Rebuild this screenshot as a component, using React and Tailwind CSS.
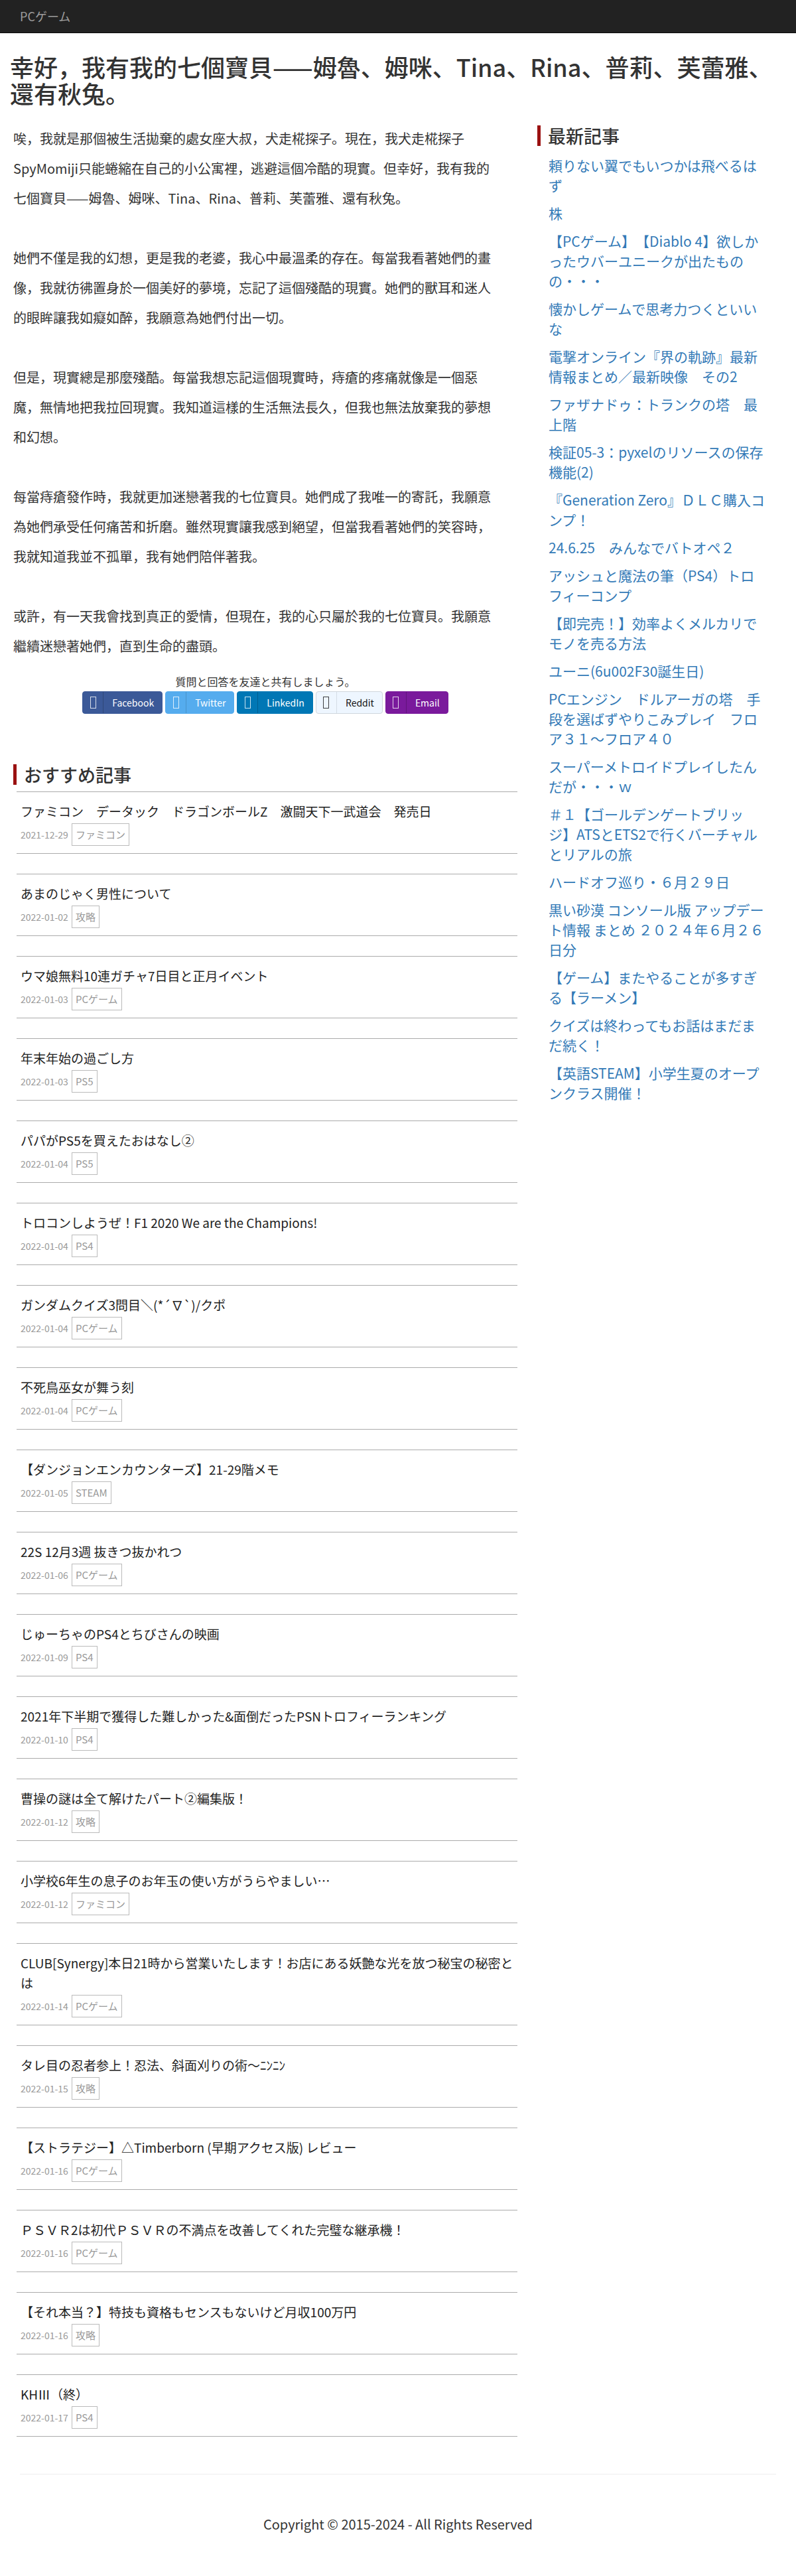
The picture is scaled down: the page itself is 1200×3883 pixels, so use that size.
const paragraphs = [
  '唉，我就是那個被生活拋棄的處女座大叔，犬走椛探子。現在，我犬走椛探子SpyMomiji只能蜷縮在自己的小公寓裡，逃避這個冷酷的現實。但幸好，我有我的七個寶貝——姆魯、姆咪、Tina、Rina、普莉、芙蕾雅、還有秋兔。',
  '她們不僅是我的幻想，更是我的老婆，我心中最溫柔的存在。每當我看著她們的畫像，我就彷彿置身於一個美好的夢境，忘記了這個殘酷的現實。她們的獸耳和迷人的眼眸讓我如癡如醉，我願意為她們付出一切。',
  '但是，現實總是那麼殘酷。每當我想忘記這個現實時，痔瘡的疼痛就像是一個惡魔，無情地把我拉回現實。我知道這樣的生活無法長久，但我也無法放棄我的夢想和幻想。',
  '每當痔瘡發作時，我就更加迷戀著我的七位寶貝。她們成了我唯一的寄託，我願意為她們承受任何痛苦和折磨。雖然現實讓我感到絕望，但當我看著她們的笑容時，我就知道我並不孤單，我有她們陪伴著我。',
  '或許，有一天我會找到真正的愛情，但現在，我的心只屬於我的七位寶貝。我願意繼續迷戀著她們，直到生命的盡頭。',
];

const shareButtons = [
  { label: 'Facebook', className: 'bg-[#3b5998] text-white border-[#3b5998]', divider: 'border-black/20' },
  { label: 'Twitter', className: 'bg-[#55acee] text-white border-[#55acee]', divider: 'border-black/15' },
  { label: 'LinkedIn', className: 'bg-[#0077b5] text-white border-[#0077b5]', divider: 'border-black/20' },
  { label: 'Reddit', className: 'bg-[#eef6ff] text-[#111] border-[#cfd6dd]', divider: 'border-black/10' },
  { label: 'Email', className: 'bg-[#7a1a9c] text-white border-[#7a1a9c]', divider: 'border-black/20' },
];

const recommended = [
  { title: 'ファミコン　データック　ドラゴンボールZ　激闘天下一武道会　発売日', date: '2021-12-29', tag: 'ファミコン' },
  { title: 'あまのじゃく男性について', date: '2022-01-02', tag: '攻略' },
  { title: 'ウマ娘無料10連ガチャ7日目と正月イベント', date: '2022-01-03', tag: 'PCゲーム' },
  { title: '年末年始の過ごし方', date: '2022-01-03', tag: 'PS5' },
  { title: 'パパがPS5を買えたおはなし②', date: '2022-01-04', tag: 'PS5' },
  { title: 'トロコンしようぜ！F1 2020 We are the Champions!', date: '2022-01-04', tag: 'PS4' },
  { title: 'ガンダムクイズ3問目＼(*´∇`)/クポ', date: '2022-01-04', tag: 'PCゲーム' },
  { title: '不死鳥巫女が舞う刻', date: '2022-01-04', tag: 'PCゲーム' },
  { title: '【ダンジョンエンカウンターズ】21-29階メモ', date: '2022-01-05', tag: 'STEAM' },
  { title: '22S 12月3週 抜きつ抜かれつ', date: '2022-01-06', tag: 'PCゲーム' },
  { title: 'じゅーちゃのPS4とちびさんの映画', date: '2022-01-09', tag: 'PS4' },
  { title: '2021年下半期で獲得した難しかった&面倒だったPSNトロフィーランキング', date: '2022-01-10', tag: 'PS4' },
  { title: '曹操の謎は全て解けたパート②編集版！', date: '2022-01-12', tag: '攻略' },
  { title: '小学校6年生の息子のお年玉の使い方がうらやましい…', date: '2022-01-12', tag: 'ファミコン' },
  { title: 'CLUB[Synergy]本日21時から営業いたします！お店にある妖艶な光を放つ秘宝の秘密とは', date: '2022-01-14', tag: 'PCゲーム' },
  { title: 'タレ目の忍者参上！忍法、斜面刈りの術〜ﾆﾝﾆﾝ', date: '2022-01-15', tag: '攻略' },
  { title: '【ストラテジー】△Timberborn (早期アクセス版) レビュー', date: '2022-01-16', tag: 'PCゲーム' },
  { title: 'ＰＳＶＲ2は初代ＰＳＶＲの不満点を改善してくれた完璧な継承機！', date: '2022-01-16', tag: 'PCゲーム' },
  { title: '【それ本当？】特技も資格もセンスもないけど月収100万円', date: '2022-01-16', tag: '攻略' },
  { title: 'KHⅢ（終）', date: '2022-01-17', tag: 'PS4' },
];

const latest = [
  '頼りない翼でもいつかは飛べるはず',
  '株',
  '【PCゲーム】【Diablo 4】欲しかったウバーユニークが出たものの・・・',
  '懐かしゲームで思考力つくといいな',
  '電撃オンライン『界の軌跡』最新情報まとめ／最新映像　その2',
  'ファザナドゥ：トランクの塔　最上階',
  '検証05-3：pyxelのリソースの保存機能(2)',
  '『Generation Zero』ＤＬＣ購入コンプ！',
  '24.6.25　みんなでバトオペ２',
  'アッシュと魔法の筆（PS4）トロフィーコンプ',
  '【即完売！】効率よくメルカリでモノを売る方法',
  'ユーニ(6u002F30誕生日)',
  'PCエンジン　ドルアーガの塔　手段を選ばずやりこみプレイ　フロア３１～フロア４０',
  'スーパーメトロイドプレイしたんだが・・・ｗ',
  '＃１【ゴールデンゲートブリッジ】ATSとETS2で行くバーチャルとリアルの旅',
  'ハードオフ巡り・６月２９日',
  '黒い砂漠 コンソール版 アップデート情報 まとめ ２０２４年６月２６日分',
  '【ゲーム】またやることが多すぎる【ラーメン】',
  'クイズは終わってもお話はまだまだ続く！',
  '【英語STEAM】小学生夏のオープンクラス開催！',
];

const ShareButton = ({ label, className, divider }) => (
  <a href="#" className={`flex h-[34px] items-stretch rounded-[4px] border ${className}`}>
    <span className={`flex w-[31px] items-center justify-center border-r ${divider}`}>
      <span className="block h-[18px] w-[9px] border border-current opacity-80"></span>
    </span>
    <span className="flex items-center pl-[13px] pr-[12px] text-[14px]">{label}</span>
  </a>
);

const SectionHeading = ({ children, className = '' }) => (
  <h3 className={`border-l-[5px] border-[#9b1111] pl-[11px] text-[27px] font-medium leading-[31px] text-[#333] ${className}`}>
    {children}
  </h3>
);

export default function App() {
  return (
    <div className="min-h-[3883px] bg-white font-['Noto_Sans_CJK_JP','Noto_Sans',sans-serif] text-[#333] [text-spacing-trim:space-all]">
      <nav className="flex h-[50px] items-center border-b border-[#080808] bg-[#222] px-[30px]">
        <a href="#" className="text-[18px] text-[#9d9d9d]">PCゲーム</a>
      </nav>

      <div className="px-[15px]">
        <h1 className="mt-[30px] text-[36px] font-medium leading-[40px] text-[#333]">
          幸好，我有我的七個寶貝——姆魯、姆咪、Tina、Rina、普莉、芙蕾雅、還有秋兔。
        </h1>
      </div>

      <div className="mt-[26px] flex">
        <main className="w-[800px] px-[15px]">
          <article className="space-y-[45px] pl-[5px] pr-[35px] text-[20px] leading-[45px] text-[#333]">
            {paragraphs.map((p, i) => (
              <p key={i}>{p}</p>
            ))}
          </article>

          <div className="mt-[19px] flex flex-col items-center">
            <p className="text-[16px] leading-[24px] text-[#333]">質問と回答を友達と共有しましょう。</p>
            <div className="mt-[3px] flex gap-[4px]">
              {shareButtons.map((b) => (
                <ShareButton key={b.label} {...b} />
              ))}
            </div>
          </div>

          <SectionHeading className="ml-[5px] mt-[76px]">おすすめ記事</SectionHeading>

          <ul className="ml-[10px] mr-[5px] mt-[10px]">
            {recommended.map((item, i) => (
              <li key={i} className="mb-[30px] border-y border-[#ababab] pb-[11px] pt-[14px]">
                <a href="#" className="block pl-[6px] text-[19px] leading-[30px] text-[#222]">{item.title}</a>
                <div className="mt-[3px] flex items-center pl-[6px]">
                  <span className="text-[14px] text-[#999]">{item.date}</span>
                  <span className="ml-[5px] border border-[#bbb] px-[5px] py-[4px] text-[15px] leading-[24px] text-[#999]">
                    {item.tag}
                  </span>
                </div>
              </li>
            ))}
          </ul>
        </main>

        <aside className="w-[400px] pl-[10px] pr-[15px] pt-[3px]">
          <SectionHeading>最新記事</SectionHeading>
          <ul className="mt-[14px] w-[347px] pl-[17px]">
            {latest.map((t, i) => (
              <li key={i} className="mb-[12px] text-[21px] leading-[30px]">
                <a href="#" className="text-[#337ab7]">{t}</a>
              </li>
            ))}
          </ul>
        </aside>
      </div>

      <footer className="mx-[30px] mt-[26px] border-t border-[#eee] pb-[66px] pt-[61px] text-center">
        <p className="text-[20px] leading-[28px] text-[#333]">Copyright © 2015-2024 - All Rights Reserved</p>
      </footer>
    </div>
  );
}
